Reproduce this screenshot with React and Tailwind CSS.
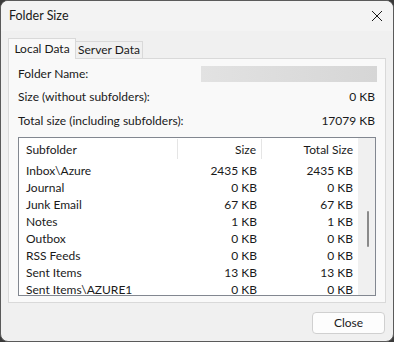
import React from "react";

const rows = [
  ["Inbox\\Azure", "2435 KB", "2435 KB"],
  ["Journal", "0 KB", "0 KB"],
  ["Junk Email", "67 KB", "67 KB"],
  ["Notes", "1 KB", "1 KB"],
  ["Outbox", "0 KB", "0 KB"],
  ["RSS Feeds", "0 KB", "0 KB"],
  ["Sent Items", "13 KB", "13 KB"],
  ["Sent Items\\AZURE1", "0 KB", "0 KB"],
];

export default function App() {
  return (
    <div
      className="w-[394px] h-[342px] bg-[#3a3a3a] text-[12px] text-[#1a1a1a] overflow-hidden"
      style={{ fontFamily: 'Lato, "Noto Sans", sans-serif' }}
    >
      <div className="w-[394px] h-[342px] rounded-[8px] border border-[#5a5a5a] bg-[#f0f0f0] flex flex-col overflow-hidden">
        {/* title bar */}
        <div className="h-[30px] flex items-center justify-between pl-[8px] pr-[9px] bg-[#f3f3f3]">
          <span className="text-[12.5px] leading-none">Folder Size</span>
          <svg width="12" height="12" viewBox="0 0 12 12" className="mr-[1px]">
            <path d="M1 1 L11 11 M11 1 L1 11" stroke="#1a1a1a" strokeWidth="1" />
          </svg>
        </div>
        {/* tabs */}
        <div className="flex items-end h-[27px] pl-[7px] pt-[7px]">
          <div className="w-[68px] h-[21px] flex items-center justify-center bg-[#f9f9f9] border border-b-0 border-[#d9d9d9] relative top-[1px]">
            Local Data
          </div>
          <div className="w-[67px] h-[17px] flex items-center justify-center bg-[#f0f0f0] border border-l-0 border-b-0 border-[#d9d9d9]">
            Server Data
          </div>
        </div>
        <div className="mx-[7px] h-[245px] border border-[#d9d9d9] bg-[#f9f9f9] px-[9px] pt-[7px] flex flex-col">
          <div className="flex items-center h-[16px]">
            <span className="flex-1">Folder Name:</span>
            <div className="w-[176px] h-[16px] bg-gradient-to-r from-[#e2e2e2] to-[#d6d6d6] mr-[-1px]"></div>
          </div>
          <div className="flex items-center justify-between h-[16px] mt-[7px]">
            <span>Size (without subfolders):</span>
            <span className="mr-[1px]">0 KB</span>
          </div>
          <div className="flex items-center justify-between h-[16px] mt-[8px]">
            <span>Total size (including subfolders):</span>
            <span className="mr-[1px]">17079 KB</span>
          </div>
          <div className="mt-[8px] h-[159px] border border-[#828790] bg-white flex overflow-hidden">
            <div className="flex-1 flex flex-col">
              <div className="h-[27px] flex pt-[1px]">
                <div className="w-[159px] pl-[7px] pt-[2px] flex items-center border-r border-[#e5e5e5] mb-[2px]">Subfolder</div>
                <div className="w-[84px] pr-[5px] pt-[2px] flex items-center justify-end border-r border-[#e5e5e5] mb-[2px]">Size</div>
                <div className="w-[96px] pr-[5px] pt-[2px] flex items-center justify-end mb-[2px]">Total Size</div>
              </div>
              <div className="flex flex-col pt-[1px]">
                {rows.map((r) => (
                  <div key={r[0]} className="h-[17px] flex items-center">
                    <div className="w-[159px] pl-[7px]">{r[0]}</div>
                    <div className="w-[84px] pr-[5px] text-right">{r[1]}</div>
                    <div className="w-[96px] pr-[5px] text-right">{r[2]}</div>
                  </div>
                ))}
              </div>
            </div>
            <div className="w-[18px] bg-[#f0f0f0] flex justify-center">
              <div className="w-[2px] h-[36px] bg-[#8a8a8a] rounded-full mt-[73px] ml-[2px]"></div>
            </div>
          </div>
        </div>
        <div className="flex justify-end pr-[8px] mt-[9px]">
          <div className="w-[73px] h-[22px] rounded-[4px] border border-[#d0d0d0] bg-[#fdfdfd] flex items-center justify-center">
            Close
          </div>
        </div>
      </div>
    </div>
  );
}
